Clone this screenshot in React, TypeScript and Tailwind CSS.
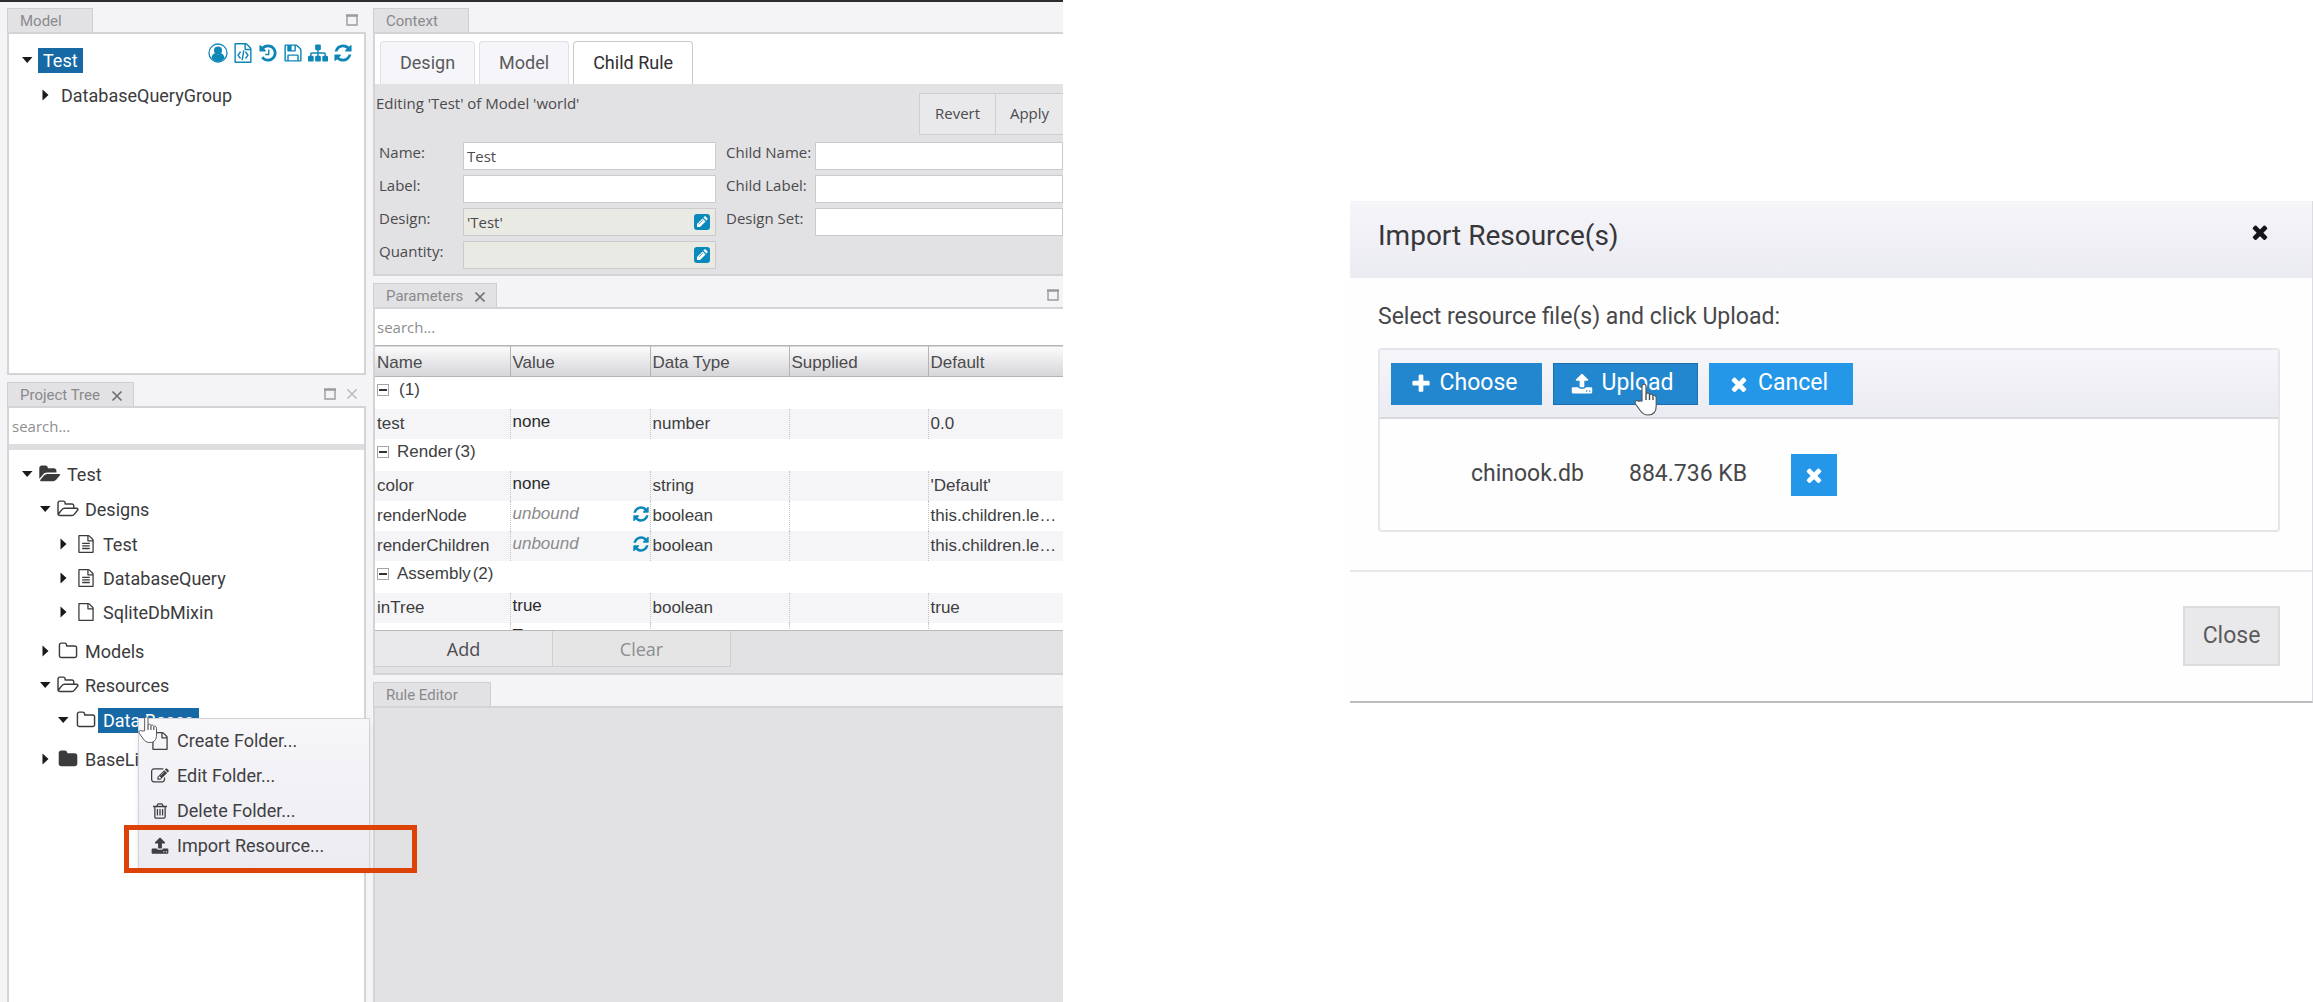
import type { ReactNode } from "react";

// Icon outlines, all drawn on a 1792 unit grid
const FILE_BODY =
  "M1596 380q28 28 48 76t20 88v1152q0 40-28 68t-68 28h-1344q-40 0-68-28t-28-68v-1600q0-40 28-68t68-28h896q40 0 88 20t76 48zm-444-244v376h376q-10-29-22-41l-313-313q-12-12-41-22zm384 1528v-1024h-416q-40 0-68-28t-28-68v-416h-768v1536h1280z";

const ICONS = {
  file: FILE_BODY,
  fileText:
    FILE_BODY +
    "M512 800q0-14 9-23t23-9h704q14 0 23 9t9 23v64q0 14-9 23t-23 9h-704q-14 0-23-9t-9-23v-64zm736 224q14 0 23 9t9 23v64q0 14-9 23t-23 9h-704q-14 0-23-9t-9-23v-64q0-14 9-23t23-9h704zm0 256q14 0 23 9t9 23v64q0 14-9 23t-23 9h-704q-14 0-23-9t-9-23v-64q0-14 9-23t23-9h704z",
  fileCode:
    FILE_BODY +
    "M608 768q8-11 21-12.500t24 6.500l51 38q11 8 12.500 21t-6.500 24l-182 243 182 243q8 11 6.500 24t-12.500 21l-51 38q-11 8-24 6.500t-21-12.500l-226-301q-14-19 0-38zM1410 1069q14 19 0 38l-226 301q-8 11-21 12.500t-24-6.500l-51-38q-11-8-12.500-21t6.500-24l182-243-182-243q-8-11-6.500-24t12.500-21l51-38q11-8 24-6.500t21 12.500zM790 1534q-13-2-20.500-13t-5.500-24l138-831q2-13 13-20.500t24-5.500l63 10q13 2 20.500 13t5.500 24l-138 831q-2 13-13 20.500t-24 5.500z",
  folder:
    "M1728 608v704q0 92-66 158t-158 66h-1216q-92 0-158-66t-66-158v-960q0-92 66-158t158-66h320q92 0 158 66t66 158v32h672q92 0 158 66t66 158z",
  folderO:
    "M1600 1312v-704q0-40-28-68t-68-28h-704q-40 0-68-28t-28-68v-64q0-40-28-68t-68-28h-320q-40 0-68 28t-28 68v960q0 40 28 68t68 28h1216q40 0 68-28t28-68zm128-704v704q0 92-66 158t-158 66h-1216q-92 0-158-66t-66-158v-960q0-92 66-158t158-66h320q92 0 158 66t66 158v32h672q92 0 158 66t66 158z",
  folderOpen:
    "M1815 952q0 31-31 66l-336 396q-43 51-120.500 86.500t-143.500 35.500h-1088q-34 0-60.500-13t-26.500-43q0-31 31-66l336-396q43-51 120.500-86.500t143.500-35.500h1088q34 0 60.500 13t26.500 43zm-343-344v160h-832q-94 0-197 47.500t-164 119.500l-337 396-5 6q0-4-.5-12.500t-.5-12.500v-960q0-92 66-158t158-66h320q92 0 158 66t66 158v32h544q92 0 158 66t66 158z",
  folderOpenO:
    "M1717 931q0-35-53-35h-1088q-40 0-85.500 21.500t-71.500 52.500l-294 363q-18 24-18 40 0 35 53 35h1088q40 0 86-22t71-53l294-363q18-22 18-39zm-1141-163h768v-160q0-40-28-68t-68-28h-576q-40 0-68-28t-28-68v-64q0-40-28-68t-68-28h-320q-40 0-68 28t-28 68v853l256-315q44-53 116-87.500t140-34.500zm1269 163q0 62-46 120l-295 363q-43 53-116 87.500t-140 34.500h-1088q-92 0-158-66t-66-158v-960q0-92 66-158t158-66h320q92 0 158 66t66 158v32h544q92 0 158 66t66 158v160h192q54 0 99 24.500t67 70.500q15 32 15 68z",
  refresh:
    "M1639 1056q0 5-1 7-64 268-268 434.500t-478 166.500q-146 0-282.500-55t-243.500-157l-129 129q-19 19-45 19t-45-19-19-45v-448q0-26 19-45t45-19h448q26 0 45 19t19 45-19 45l-137 137q71 66 161 102t187 36q134 0 250-65t186-179q11-17 53-117 8-23 30-23h192q13 0 22.500 9.500t9.500 22.500zm25-800v448q0 26-19 45t-45 19h-448q-26 0-45-19t-19-45 19-45l138-138q-148-137-349-137-134 0-250 65t-186 179q-11 17-53 117-8 23-30 23h-199q-13 0-22.500-9.500t-9.500-22.500v-7q65-268 270-434.500t480-166.500q146 0 284 55.500t245 156.500l130-129q19-19 45-19t45 19 19 45z",
  history:
    "M1664 896q0 156-61 298t-164 245-245 164-298 61q-172 0-327-72.500t-264-204.500q-7-10-6.500-22.500t8.500-20.500l137-138q10-9 25-9 16 2 23 12 73 95 179 147t225 52q104 0 198.500-40.500t163.500-109.500 109.500-163.500 40.500-198.500-40.500-198.500-109.500-163.500-163.500-109.500-198.500-40.500q-98 0-188 35.500t-160 101.500l137 138q31 30 14 69-17 40-59 40h-448q-26 0-45-19t-19-45v-448q0-42 40-59 39-17 69 14l130 129q107-101 244.500-156.500t284.500-55.500q156 0 298 61t245 164 164 245 61 298zm-640-288v448q0 14-9 23t-23 9h-320q-14 0-23-9t-9-23v-64q0-14 9-23t23-9h224v-352q0-14 9-23t23-9h64q14 0 23 9t9 23z",
  save: "M512 1536h768v-384h-768v384zm896 0h128v-896q0-14-10-38.500t-20-34.500l-281-281q-10-10-34-20t-39-10v416q0 40-28 68t-68 28h-576q-40 0-68-28t-28-68v-416h-128v1280h128v-416q0-40 28-68t68-28h832q40 0 68 28t28 68v416zm-384-928v-320q0-13-9.500-22.500t-22.500-9.500h-192q-13 0-22.500 9.500t-9.500 22.500v320q0 13 9.500 22.500t22.500 9.500h192q13 0 22.500-9.500t9.500-22.500zm640 32v928q0 40-28 68t-68 28h-1344q-40 0-68-28t-28-68v-1344q0-40 28-68t68-28h928q40 0 88 20t76 48l280 280q28 28 48 76t20 88z",
  sitemap:
    "M1792 1248v320q0 40-28 68t-68 28h-320q-40 0-68-28t-28-68v-320q0-40 28-68t68-28h96v-192h-512v192h96q40 0 68 28t28 68v320q0 40-28 68t-68 28h-320q-40 0-68-28t-28-68v-320q0-40 28-68t68-28h96v-192h-512v192h96q40 0 68 28t28 68v320q0 40-28 68t-68 28h-320q-40 0-68-28t-28-68v-320q0-40 28-68t68-28h96v-192q0-52 38-90t90-38h512v-192h-96q-40 0-68-28t-28-68v-320q0-40 28-68t68-28h320q40 0 68 28t28 68v320q0 40-28 68t-68 28h-96v192h512q52 0 90 38t38 90v192h96q40 0 68 28t28 68z",
  edit: "M888 1184l116-116-152-152-116 116v56h96v96h56zm440-720q-16-16-33 1l-350 350q-17 17-1 33t33-1l350-350q17-17 1-33zm80 594v190q0 119-84.500 203.500t-203.500 84.500h-832q-119 0-203.500-84.500t-84.500-203.500v-832q0-119 84.500-203.500t203.500-84.500h832q63 0 117 25 15 7 18 23 3 17-9 29l-49 49q-14 14-32 8-23-6-45-6h-832q-66 0-113 47t-47 113v832q0 66 47 113t113 47h832q66 0 113-47t47-113v-126q0-13 9-22l64-64q15-15 35-7t20 29zm-96-738l288 288-672 672h-288v-288zm444 132l-92 92-288-288 92-92q28-28 68-28t68 28l152 152q28 28 28 68t-28 68z",
  trash:
    "M704 736v576q0 14-9 23t-23 9h-64q-14 0-23-9t-9-23v-576q0-14 9-23t23-9h64q14 0 23 9t9 23zm256 0v576q0 14-9 23t-23 9h-64q-14 0-23-9t-9-23v-576q0-14 9-23t23-9h64q14 0 23 9t9 23zm256 0v576q0 14-9 23t-23 9h-64q-14 0-23-9t-9-23v-576q0-14 9-23t23-9h64q14 0 23 9t9 23zm128 724v-948h-896v948q0 22 7 40.500t14.500 27 10.500 8.500h832q3 0 10.500-8.500t14.500-27 7-40.500zm-672-1076h448l-48-117q-7-9-17-11h-317q-10 2-17 11zm928 32v64q0 14-9 23t-23 9h-96v948q0 83-47 143.500t-113 60.500h-832q-66 0-113-58.500t-47-141.500v-952h-96q-14 0-23-9t-9-23v-64q0-14 9-23t23-9h309l70-167q15-37 54-63t79-26h320q40 0 79 26t54 63l70 167h309q14 0 23 9t9 23z",
  upload:
    "M1344 1472q0-26-19-45t-45-19-45 19-19 45 19 45 45 19 45-19 19-45zm256 0q0-26-19-45t-45-19-45 19-19 45 19 45 45 19 45-19 19-45zm128-224v320q0 40-28 68t-68 28h-1472q-40 0-68-28t-28-68v-320q0-40 28-68t68-28h427q21 56 70.500 92t110.500 36h256q61 0 110.500-36t70.500-92h427q40 0 68 28t28 68zm-325-648q-17 40-59 40h-256v448q0 26-19 45t-45 19h-256q-26 0-45-19t-19-45v-448h-256q-42 0-59-40-17-39 14-69l448-448q18-19 45-19t45 19l448 448q31 30 14 69z",
  plus: "M1600 736v192q0 40-28 68t-68 28h-416v416q0 40-28 68t-68 28h-192q-40 0-68-28t-28-68v-416h-416q-40 0-68-28t-28-68v-192q0-40 28-68t68-28h416v-416q0-40 28-68t68-28h192q40 0 68 28t28 68v416h416q40 0 68 28t28 68z",
  times:
    "M1490 1322q0 40-28 68l-136 136q-28 28-68 28t-68-28l-294-294-294 294q-28 28-68 28t-68-28l-136-136q-28-28-28-68t28-68l294-294-294-294q-28-28-28-68t28-68l136-136q28-28 68-28t68 28l294 294 294-294q28-28 68-28t68 28l136 136q28 28 28 68t-28 68l-294 294 294 294q28 28 28 68z",
};

type IconName = keyof typeof ICONS;

function Icon({ name, className = "size-5" }: { name: IconName; className?: string }) {
  return (
    <svg viewBox="0 0 1792 1792" fill="currentColor" overflow="visible" aria-hidden="true" className={className}>
      <path d={ICONS[name]} />
    </svg>
  );
}

function UserIcon() {
  return (
    <svg viewBox="0 0 20 20" aria-hidden="true" className="size-5">
      <circle cx="10" cy="10" r="9" fill="none" stroke="currentColor" strokeWidth="1.3" />
      <circle cx="10" cy="7.500" r="4" fill="currentColor" />
      <path d="M3.500 15.200c.4-2.800 1.700-4.600 3.700-4.900 1.700 1.500 3.900 1.500 5.600 0 2 .3 3.300 2.100 3.700 4.900a8.300 8.300 0 0 1-13 0z" fill="currentColor" />
    </svg>
  );
}

// White pencil on a rounded blue square
function PencilIcon() {
  return (
    <svg viewBox="0 0 16 16" aria-hidden="true" className="size-4">
      <rect width="16" height="16" rx="3" fill="#0a8abb" />
      <path d="M3 13v-3l5.600-5.600 3 3L6 13zM9.400 3.600l1-1c.4-.4.900-.4 1.300 0l1.700 1.700c.4.400.4.900 0 1.300l-1 1z" fill="#fff" />
      <path d="M4.700 10.300l4.200-4.200" stroke="#0a8abb" strokeWidth=".7" />
    </svg>
  );
}

function MaximizeIcon() {
  return (
    <svg viewBox="0 0 12 12" aria-hidden="true" className="size-3">
      <path d="M1 1.500h10v9.500H1z" fill="none" stroke="#9b9b9d" strokeWidth="1.400" />
      <path d="M0 1.500h12" stroke="#9b9b9d" strokeWidth="2.400" />
    </svg>
  );
}

function CloseIcon({ className }: { className: string }) {
  return (
    <svg viewBox="0 0 12 12" fill="none" stroke="currentColor" strokeWidth="1.700" aria-hidden="true" className={className}>
      <path d="M1.500 1.500l9 9M10.500 1.500l-9 9" />
    </svg>
  );
}

function HandCursor({ className }: { className: string }) {
  return (
    <svg viewBox="0 0 24 36" aria-hidden="true" className={className}>
      <path
        d="M8 19V4.500C8 1.500 12 1.500 12 4.500V12c.5-1.500 3.300-1.200 3.500.7.800-1.200 3.200-.7 3.400 1.100 1.200-.9 3.300-.1 3.300 2V24c0 5.500-2.700 9-8 9-4 0-6-1.500-8-4.500L1.500 22c-1.400-2.300 1-4.600 3-2.800z"
        fill="#fff"
        stroke="#55585c"
        strokeWidth="1.200"
      />
      <path d="M12 12v6M15.500 13v5M19 14.500V18" stroke="#3c3f44" strokeWidth="1.300" />
    </svg>
  );
}

function Caret({ open }: { open: boolean }) {
  return (
    <svg viewBox="0 0 12 12" aria-hidden="true" className="size-3 fill-[#1a1a1a]">
      <path d={open ? "M1 3h10.500L6.200 9z" : "M3.500 0.500v11L9.500 6z"} />
    </svg>
  );
}

// Docked pane: small tab on top, bordered body under it
type PaneProps = {
  title: string;
  tabClass?: string;
  closable?: boolean;
  tools?: ReactNode;
  bodyClass: string;
  className?: string;
  children?: ReactNode;
};

function Pane({ title, tabClass = "", closable, tools, bodyClass, className = "", children }: PaneProps) {
  return (
    <section className={`flex flex-col ${className}`}>
      <header className="flex h-6 shrink-0 items-stretch justify-between">
        <div
          className={`flex items-center gap-[11px] border border-b-0 border-[#cfcfd1] bg-[#e2e1e4] pt-0.5 pl-3 text-[15px] text-[#8a8a8c] ${tabClass}`}
        >
          {title}
          {closable && (
            <button aria-label={`Close ${title}`} className="text-[#6f6f71]">
              <CloseIcon className="size-3" />
            </button>
          )}
        </div>
        <div className="flex items-center gap-2">{tools}</div>
      </header>
      <div className={`border-2 border-[#d4d4d7] ${bodyClass}`}>{children}</div>
    </section>
  );
}

type TreeNode = {
  label: string;
  icon?: IconName;
  open?: boolean;
  selected?: boolean;
  menu?: boolean;
  children?: TreeNode[];
};

const MODEL_TREE: TreeNode[] = [
  { label: "Test", open: true, selected: true, children: [{ label: "DatabaseQueryGroup" }] },
];

const PROJECT_TREE: TreeNode[] = [
  {
    label: "Test",
    icon: "folderOpen",
    open: true,
    children: [
      {
        label: "Designs",
        icon: "folderOpenO",
        open: true,
        children: [
          { label: "Test", icon: "fileText" },
          { label: "DatabaseQuery", icon: "fileText" },
          { label: "SqliteDbMixin", icon: "file" },
        ],
      },
      { label: "Models", icon: "folderO" },
      {
        label: "Resources",
        icon: "folderOpenO",
        open: true,
        children: [{ label: "Data Bases", icon: "folderO", open: true, selected: true, menu: true }],
      },
      { label: "BaseLib", icon: "folder" },
    ],
  },
];

const MENU_ITEMS: { label: string; icon: IconName }[] = [
  { label: "Create Folder...", icon: "file" },
  { label: "Edit Folder...", icon: "edit" },
  { label: "Delete Folder...", icon: "trash" },
  { label: "Import Resource...", icon: "upload" },
];

function FolderMenu() {
  return (
    <div className="absolute top-2.5 left-10 z-10">
      <ul
        role="menu"
        className="w-58 border border-[#d3d3d8] bg-linear-to-b from-[#f7f7fa] to-[#ebebf1] pt-[5px] pb-1 shadow-md"
      >
        {MENU_ITEMS.map((item) => (
          <li key={item.label} role="none">
            <button role="menuitem" className="flex h-[35px] w-full items-center gap-2 pl-3 text-[#3f3f42]">
              <Icon name={item.icon} className="size-[18px]" />
              {item.label}
            </button>
          </li>
        ))}
      </ul>
      <HandCursor className="absolute -top-1 left-0 h-8 w-5" />
      {/* Callout frame round the last entry */}
      <div className="pointer-events-none absolute -bottom-1 -left-3.5 h-12 w-[293px] border-[5px] border-[#dd4206]" />
    </div>
  );
}

function Tree({ nodes, nested }: { nodes: TreeNode[]; nested?: boolean }) {
  return (
    <ul className={nested ? "mt-px pb-[5px] pl-[18px]" : ""}>
      {nodes.map((node) => (
        <li key={node.label}>
          <div className="flex h-[34px] items-center whitespace-nowrap">
            <span className="mr-0.5 flex w-[19px] shrink-0 justify-center">
              <Caret open={!!node.open} />
            </span>
            {node.icon && (
              <span className="flex w-6 shrink-0 justify-center">
                <Icon
                  name={node.icon}
                  className={node.icon === "file" || node.icon === "fileText" ? "size-[18px]" : "size-5"}
                />
              </span>
            )}
            <span className="relative">
              <span className={`block px-[5px] leading-[25px] ${node.selected ? "bg-[#1769a5] text-white" : ""}`}>
                {node.label}
              </span>
              {node.menu && <FolderMenu />}
            </span>
          </div>
          {node.children && <Tree nodes={node.children} nested />}
        </li>
      ))}
    </ul>
  );
}

function ModelPane() {
  const tools: IconName[] = ["fileCode", "history", "save", "sitemap", "refresh"];
  return (
    <Pane
      title="Model"
      tabClass="w-[86px]"
      tools={<span className="mr-2"><MaximizeIcon /></span>}
      bodyClass="flex h-[343px] items-start bg-white pt-[9px] pl-2"
    >
      <div className="min-w-0 flex-1">
        <Tree nodes={MODEL_TREE} />
      </div>
      <div className="flex shrink-0 items-center gap-[5px] pr-[11px] text-[#0d86b8]">
        <UserIcon />
        {tools.map((name) => (
          <Icon key={name} name={name} className="size-5" />
        ))}
      </div>
    </Pane>
  );
}

function ProjectPane() {
  return (
    <Pane
      title="Project Tree"
      tabClass="pr-2.5"
      closable
      tools={
        <span className="mr-2 flex gap-2.5 text-[#bdbdbf]">
          <MaximizeIcon />
          <CloseIcon className="size-3" />
        </span>
      }
      className="min-h-0 flex-1"
      bodyClass="min-h-0 flex-1 border-b-0 bg-white"
    >
      <input
        aria-label="Search project"
        placeholder="search..."
        className="block h-9 w-full border-b-0 px-[3px] font-['Open_Sans',sans-serif] text-[15px] placeholder:text-[#8e8e90]"
      />
      <div className="h-1.5 bg-[#dedee0]" />
      <div className="pt-[7px] pl-2">
        <Tree nodes={PROJECT_TREE} />
      </div>
    </Pane>
  );
}

// Label and text box of the rule form
type FieldProps = { id: string; label: string; value?: string; bound?: boolean };

function Field({ id, label, value = "", bound }: FieldProps) {
  return (
    <>
      <label htmlFor={id} className="leading-[21px]">
        {label}
      </label>
      <span className="relative block">
        <input
          id={id}
          defaultValue={value}
          className={`h-7 w-full border border-[#cbcbcd] px-[3px] text-[15px] ${bound ? "bg-[#e9eae4]" : "bg-white"}`}
        />
        {bound && (
          <button aria-label={`Edit ${label}`} className="absolute top-1.5 right-1.5">
            <PencilIcon />
          </button>
        )}
      </span>
    </>
  );
}

const RULE_TABS = ["Design", "Model", "Child Rule"];

function ContextPane() {
  return (
    <Pane title="Context" tabClass="w-24" bodyClass="h-[244px] border-r-0 bg-[#e2e1e4]">
      <div role="tablist" className="flex h-[50px] items-end gap-1 bg-white pl-[5px]">
        {RULE_TABS.map((tab) => (
          <button
            key={tab}
            role="tab"
            aria-selected={tab === "Child Rule"}
            className={`h-[43px] rounded-t border border-b-0 px-[19px] text-lg ${
              tab === "Child Rule"
                ? "border-[#c9c9cb] bg-white text-[#2f2f31]"
                : "border-[#e0e0e4] bg-[#f6f6fa] text-[#5a5a5c]"
            }`}
          >
            {tab}
          </button>
        ))}
      </div>
      <div className="font-['Open_Sans',sans-serif] text-[15px] text-[#4b4b4d]">
        <div className="flex h-[58px] justify-between">
          <h2 className="pt-[7px] pl-px leading-6">Editing 'Test' of Model 'world'</h2>
          <div className="flex pt-[9px]">
            <button className="h-[42px] w-[77px] border border-[#cfcfd1] bg-[#e9e8eb]">Revert</button>
            <button className="h-[42px] w-[67px] border border-x-0 border-[#cfcfd1] bg-[#e9e8eb]">Apply</button>
          </div>
        </div>
        <form className="flex gap-2.5 pl-1">
          <div className="grid grid-cols-[84px_253px] content-start gap-y-[5px]">
            <Field id="name" label="Name:" value="Test" />
            <Field id="label" label="Label:" />
            <Field id="design" label="Design:" value="'Test'" bound />
            <Field id="quantity" label="Quantity:" bound />
          </div>
          <div className="grid flex-1 grid-cols-[89px_1fr] content-start gap-y-[5px]">
            <Field id="child-name" label="Child Name:" />
            <Field id="child-label" label="Child Label:" />
            <Field id="design-set" label="Design Set:" />
          </div>
        </form>
      </div>
    </Pane>
  );
}

type Param = { name: string; value: string; type: string; fallback: string; unbound?: boolean };

const GROUPS: { title: string; count: number; params: Param[] }[] = [
  { title: "", count: 1, params: [{ name: "test", value: "none", type: "number", fallback: "0.0" }] },
  {
    title: "Render",
    count: 3,
    params: [
      { name: "color", value: "none", type: "string", fallback: "'Default'" },
      { name: "renderNode", value: "unbound", type: "boolean", fallback: "this.children.le…", unbound: true },
      { name: "renderChildren", value: "unbound", type: "boolean", fallback: "this.children.le…", unbound: true },
    ],
  },
  {
    title: "Assembly",
    count: 2,
    params: [
      { name: "inTree", value: "true", type: "boolean", fallback: "true" },
      { name: "", value: "T", type: "", fallback: "" },
    ],
  },
];

const CELL = "border-l border-dotted border-[#c4c4c6] px-0.5 align-middle whitespace-nowrap";

function ParameterTable() {
  return (
    <div className="h-[286px] overflow-hidden border-b border-[#b9b9bb] bg-white">
      <table className="w-full table-fixed border-collapse text-left font-['Liberation_Sans',Arial,sans-serif] text-[17px] leading-6 text-[#3e3e40]">
        <colgroup>
          <col className="w-[135px]" />
          <col className="w-[140px]" />
          <col className="w-[139px]" />
          <col className="w-[139px]" />
          <col />
        </colgroup>
        <thead>
          <tr className="h-[31px] border-y border-[#b4b4b6] bg-linear-to-b from-[#fbfbfc] to-[#d6d6d9] text-[#4b4b4d]">
            {["Name", "Value", "Data Type", "Supplied", "Default"].map((head) => (
              <th key={head} className="border-l border-[#b4b4b6] px-0.5 pt-1 font-normal first:border-l-0">
                {head}
              </th>
            ))}
          </tr>
        </thead>
        {GROUPS.map((group) => (
          <tbody key={group.title}>
            <tr className="h-8">
              <td colSpan={5} className="pb-1.5 pl-0.5">
                <span className="flex items-center">
                  <span className="mr-2 flex size-3 items-center justify-center border border-[#a5a5a7]">
                    <span className="h-0.5 w-2 bg-[#333]" />
                  </span>
                  {group.title}
                  <span className="ml-0.5">({group.count})</span>
                </span>
              </td>
            </tr>
            {group.params.map((param, i) => (
              <tr key={param.name} className={`h-[30px] ${i % 2 === 0 ? "bg-[#f5f5f8]" : ""}`}>
                <td className="px-0.5 align-middle">{param.name}</td>
                <td className={`${CELL} pr-0 pb-1 ${param.unbound ? "text-[#8b8b8d] italic" : "text-[#2a2a2c]"}`}>
                  <span className="flex items-center justify-between">
                    {param.value}
                    {param.unbound && <Icon name="refresh" className="size-[18px] text-[#0d86b8]" />}
                  </span>
                </td>
                <td className={CELL}>{param.type}</td>
                <td className={CELL} />
                <td className={CELL}>{param.fallback}</td>
              </tr>
            ))}
          </tbody>
        ))}
      </table>
    </div>
  );
}

function ParametersPane() {
  return (
    <Pane
      title="Parameters"
      tabClass="pr-2.5"
      closable
      tools={<span className="mr-1"><MaximizeIcon /></span>}
      bodyClass="h-[368px] border-r-0 bg-[#e2e1e4]"
    >
      <input
        aria-label="Search parameters"
        placeholder="search..."
        className="block h-9 w-full bg-white px-0.5 font-['Open_Sans',sans-serif] text-[15px] placeholder:text-[#8e8e90]"
      />
      <ParameterTable />
      <div className="flex h-9 font-['Open_Sans',sans-serif] text-lg">
        <button className="w-[178px] border border-t-0 border-l-0 border-[#cfcfd1] bg-[#e9e8eb] text-[#4b4b4d]">
          Add
        </button>
        <button disabled className="w-[178px] border border-t-0 border-l-0 border-[#cfcfd1] bg-[#e5e5e6] text-[#8e8e90]">
          Clear
        </button>
      </div>
    </Pane>
  );
}

function ImportDialog() {
  const button = "flex h-[42px] items-center justify-center text-white";
  return (
    <section
      role="dialog"
      aria-labelledby="import-title"
      className="mt-[201px] self-start border-r border-b-2 border-r-[#dcdce0] border-b-[#bdbdc0] bg-[#fefefe] text-[23px] text-[#47474a]"
    >
      <header className="flex h-[77px] justify-between bg-linear-to-b from-[#f5f5fa] to-[#ebebf2] pr-[41px] pl-7">
        <h1 id="import-title" className="text-[28px] leading-[70px] text-[#37373a]">
          Import Resource(s)
        </h1>
        <button aria-label="Close dialog" className="h-[62px] text-[#151517]">
          <Icon name="times" className="size-[22px]" />
        </button>
      </header>
      <div className="pt-[21px] pr-8 pb-[38px] pl-7">
        <p className="mb-[13px] leading-9">Select resource file(s) and click Upload:</p>
        <div className="rounded border-2 border-[#e6e6ea]">
          <div className="flex h-[69px] items-center gap-[11px] border-b-2 border-[#d9d9dc] bg-linear-to-b from-[#f5f5fa] to-[#ebebf2] pl-[11px]">
            <button className={`${button} w-[151px] gap-2 bg-[#2287cf] pr-1.5`}>
              <Icon name="plus" className="size-[22px]" />
              Choose
            </button>
            <button className={`${button} relative w-[145px] gap-2 border border-[#1b6fac] bg-[#2287cf] pr-1.5`}>
              <Icon name="upload" className="size-[22px]" />
              Upload
              <HandCursor className="absolute top-[18px] left-[78px] h-9 w-7" />
            </button>
            <button className={`${button} w-[144px] gap-2 bg-[#2497e8] pr-1.5`}>
              <Icon name="times" className="size-[22px]" />
              Cancel
            </button>
          </div>
          <div className="flex h-[111px] items-center pl-[91px]">
            <span className="w-[158px]">chinook.db</span>
            <span className="w-[162px]">884.736 KB</span>
            <button aria-label="Remove chinook.db" className={`${button} w-[46px] bg-[#2497e8]`}>
              <Icon name="times" className="size-[22px]" />
            </button>
          </div>
        </div>
      </div>
      <footer className="flex h-[131px] items-start justify-end border-t-2 border-[#e8e8ec] pt-[34px] pr-8">
        <button className="h-[60px] w-[97px] border-2 border-[#dcdcde] bg-[#e9e8eb] text-[#5b5b5e]">Close</button>
      </footer>
    </section>
  );
}

export default function App() {
  return (
    <div className="grid h-screen grid-cols-[1063fr_287fr_963fr] overflow-hidden bg-white font-['Roboto',sans-serif]">
      <main className="flex min-w-0 gap-[7px] overflow-hidden border-t-2 border-[#2f2c30] bg-[#f4f4f6] pt-1.5 pl-[7px] text-lg text-[#3b3b3d]">
        <div className="flex w-[359px] shrink-0 flex-col gap-[7px]">
          <ModelPane />
          <ProjectPane />
        </div>
        <div className="flex min-w-0 flex-1 flex-col gap-[7px]">
          <ContextPane />
          <ParametersPane />
          <Pane title="Rule Editor" tabClass="w-[118px]" className="flex-1" bodyClass="flex-1 border-r-0 border-b-0 bg-[#e2e1e4]" />
        </div>
      </main>
      <div />
      <ImportDialog />
    </div>
  );
}
